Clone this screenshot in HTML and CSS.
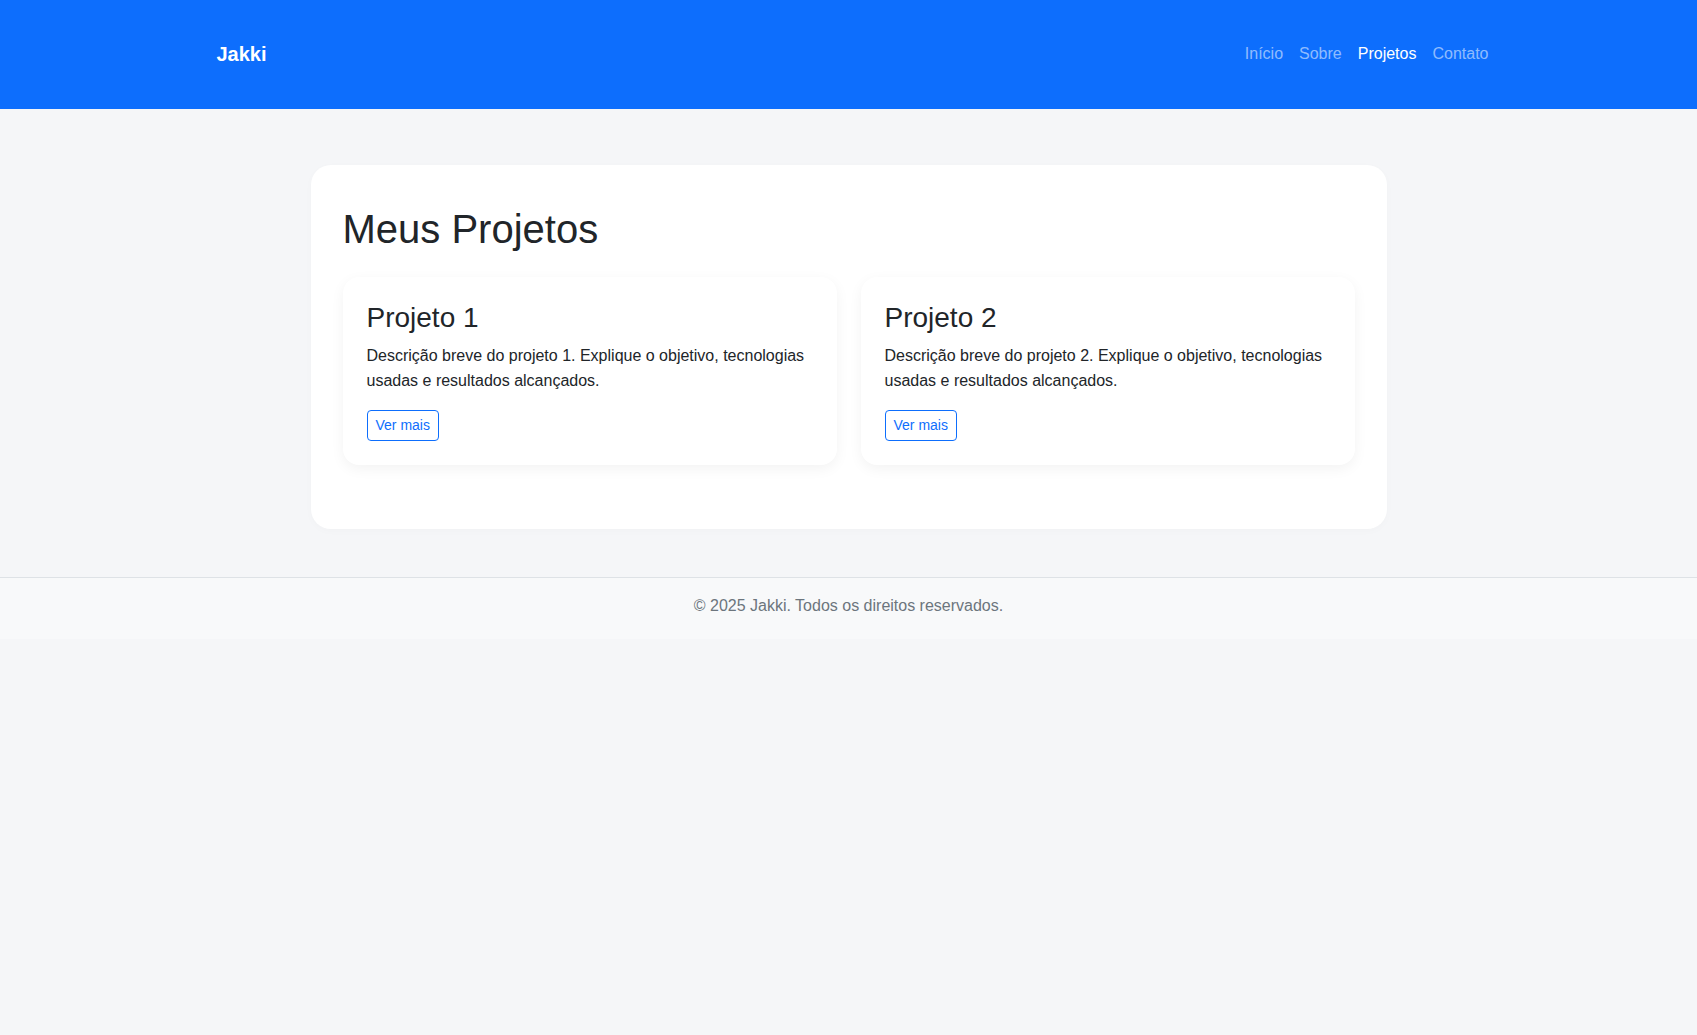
FILE: index.html
```html
<!DOCTYPE html>
<html lang="pt-BR">
<head>
<meta charset="utf-8">
<title>Jakki - Projetos</title>
<link rel="stylesheet" href="styles.css">
</head>
<body>
<header class="navbar">
  <div class="container nav-inner">
    <a class="brand" href="#">Jakki</a>
    <ul class="nav-links">
      <li><a class="nav-link" href="#">Início</a></li>
      <li><a class="nav-link" href="#">Sobre</a></li>
      <li><a class="nav-link active" href="#">Projetos</a></li>
      <li><a class="nav-link" href="#">Contato</a></li>
    </ul>
  </div>
</header>

<main class="main">
  <section class="panel">
    <h1 class="panel-title">Meus Projetos</h1>
    <div class="grid">
      <article class="project">
        <h3 class="project-title">Projeto 1</h3>
        <p class="project-text">Descrição breve do projeto 1. Explique o objetivo, tecnologias usadas e resultados alcançados.</p>
        <a class="btn-outline" href="#">Ver mais</a>
      </article>
      <article class="project">
        <h3 class="project-title">Projeto 2</h3>
        <p class="project-text">Descrição breve do projeto 2. Explique o objetivo, tecnologias usadas e resultados alcançados.</p>
        <a class="btn-outline" href="#">Ver mais</a>
      </article>
    </div>
  </section>
</main>

<footer class="footer">
  <p class="footer-text">© 2025 Jakki. Todos os direitos reservados.</p>
</footer>
</body>
</html>
```

FILE: styles.css
```css
* { box-sizing: border-box; }

html, body {
  margin: 0;
  padding: 0;
}

body {
  font-family: "Liberation Sans", Arial, sans-serif;
  font-size: 16px;
  line-height: 1.5;
  color: #212529;
  background: #f5f6f8;
  min-height: 1035px;
}

.container {
  max-width: 1320px;
  margin: 0 auto;
  padding: 0 12px;
}

/* Navbar */
.navbar {
  background: #0d6efd;
  height: 109px;
  padding-bottom: 1px;
  display: flex;
  align-items: center;
}

.nav-inner {
  width: 100%;
  display: flex;
  align-items: center;
  justify-content: space-between;
}

.brand {
  margin-left: 16px;
  font-size: 20px;
  font-weight: 700;
  line-height: 30px;
  color: #fff;
  text-decoration: none;
}

.nav-links {
  list-style: none;
  margin: 0;
  padding: 0;
  display: flex;
}

.nav-link {
  display: block;
  padding: 8px;
  line-height: 24px;
  color: rgba(255, 255, 255, 0.55);
  text-decoration: none;
}

.nav-link.active {
  color: #fff;
}

/* Main */
.main {
  padding: 56px 0 48px;
}

.panel {
  width: 1076px;
  margin: 0 auto;
  background: #fff;
  border-radius: 20px;
  padding: 40px 32px 40px;
  box-shadow: 0 2px 8px rgba(0, 0, 0, 0.02);
}

.panel-title {
  margin: 0 0 24px;
  font-size: 40px;
  font-weight: 400;
  line-height: 1.2;
  color: #212529;
}

.grid {
  display: grid;
  grid-template-columns: 1fr 1fr;
  column-gap: 24px;
}

.project {
  background: #fff;
  border-radius: 16px;
  padding: 24px;
  margin-bottom: 24px;
  box-shadow: 0 4px 14px rgba(0, 0, 0, 0.05);
}

.project-title {
  margin: 0 0 8px;
  font-size: 28px;
  font-weight: 400;
  line-height: 1.2;
}

.project-text {
  margin: 0 0 16px;
  line-height: 1.6;
}

.btn-outline {
  display: inline-block;
  padding: 4px 8px;
  font-size: 14px;
  line-height: 21px;
  color: #0d6efd;
  border: 1px solid #0d6efd;
  border-radius: 4px;
  text-decoration: none;
}

/* Footer */
.footer {
  border-top: 1px solid #dee2e6;
  background: #f8f9fa;
  padding: 16px 0 21px;
  text-align: center;
}

.footer-text {
  margin: 0;
  color: #6c757d;
}
```
